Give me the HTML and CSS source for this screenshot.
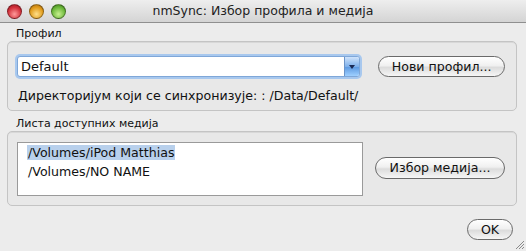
FILE: index.html
```html
<!DOCTYPE html>
<html>
<head>
<meta charset="utf-8">
<link rel="stylesheet" href="styles.css">
</head>
<body>
<div class="window">
  <div class="titlebar">
    <div class="lights">
      <span class="light red"></span>
      <span class="light yellow"></span>
      <span class="light green"></span>
    </div>
    <div class="title">nmSync: Избор профила и медија</div>
  </div>
  <div class="body">
    <div class="label">Профил</div>
    <div class="group g1">
      <div class="row">
        <div class="combo">
          <div class="combo-text">Default</div>
          <div class="combo-btn"><svg width="8" height="6" viewBox="0 0 8 6"><path d="M1 1 L7 1 L4 5 Z" fill="#1a2a55"/></svg></div>
        </div>
        <div class="btn btn-new">Нови профил...</div>
      </div>
      <div class="dir">Директоријум који се синхронизује: : /Data/Default/</div>
    </div>
    <div class="label label2">Листа доступних медија</div>
    <div class="group g2">
      <div class="list">
        <div class="item sel"><span>/Volumes/iPod Matthias</span></div>
        <div class="item"><span>/Volumes/NO NAME</span></div>
      </div>
      <div class="btn btn-media">Избор медија...</div>
    </div>
    <div class="footer">
      <div class="btn btn-ok">OK</div>
    </div>
  </div>
  <svg class="grip" width="12" height="12" viewBox="0 0 12 12">
    <path d="M11 3 L3 11 M11 6 L6 11 M11 9 L9 11" stroke="#8a8a8a" stroke-width="1"/>
  </svg>
</div>
</body>
</html>
```

FILE: styles.css
```css
* { box-sizing: border-box; }
html, body { margin: 0; padding: 0; }
body {
  width: 526px; height: 251px; overflow: hidden;
  font-family: "DejaVu Sans", sans-serif;
  font-size: 12.6px;
  color: #111;
  background: #ececec;
}
.window { position: relative; width: 526px; height: 251px; background: #ececec; }
.titlebar {
  height: 23px;
  background: linear-gradient(#eeeeee, #d4d4d4);
  border-bottom: 1px solid #8f8f8f;
  display: flex; align-items: center;
  position: relative;
}
.lights { display: flex; gap: 7px; padding-left: 7px; padding-top: 1px; }
.light { width: 15px; height: 15px; border-radius: 50%; display: block; border: 1px solid rgba(0,0,0,0.35); }
.red { background: radial-gradient(circle at 50% 70%, #ff9a9a, #d2303a 60%, #9a1a22); }
.yellow { background: radial-gradient(circle at 50% 70%, #ffe08a, #e09a1a 60%, #a86a10); }
.green { background: radial-gradient(circle at 50% 70%, #c8f090, #6cb83a 60%, #3e7a1a); }
.title {
  position: absolute; left: 0; right: 0; top: 3px;
  text-align: center; font-size: 12.5px; color: #222;
}
.body { padding: 4px 9px 0 7px; }
.label { padding-left: 9px; height: 13px; line-height: 13px; font-size: 11px; }
.label2 { margin-top: 6px; }
.group {
  border: 1px solid #c4c4c4;
  border-radius: 5px;
  background: #e8e8e8;
  margin-top: 1px;
  box-shadow: inset 0 1px 0 #d8d8d8;
}
.g1 { height: 70px; padding: 14px 11px 0 9px; }
.row { display: flex; align-items: center; height: 21px; }
.combo {
  width: 344px; height: 21px;
  border: 1px solid #7fa7d8;
  box-shadow: 0 0 0 2px #a8c8ee;
  background: #fff;
  border-radius: 3px;
  display: flex; align-items: stretch;
}
.combo-text { flex: 1; padding-left: 3px; line-height: 19px; font-size: 13px; }
.combo-btn {
  width: 15px;
  background: linear-gradient(#cfe3fb, #7eb0ea 50%, #5a97e0 51%, #9fd0ff);
  border-left: 1px solid #6b94c8;
  display: flex; align-items: center; justify-content: center;
  border-radius: 0 2px 2px 0;
}
.btn {
  height: 21px; line-height: 19px;
  border: 1px solid #6a6a6a;
  border-radius: 11px;
  background: linear-gradient(#ffffff, #f0f0f0 45%, #dcdcdc 55%, #f6f6f6);
  text-align: center;
  color: #111;
}
.btn-new { margin-left: 18px; width: 127px; }
.dir { margin-top: 11px; line-height: 15px; padding-left: 1px; }
.g2 { height: 75px; padding: 10px 11px 0 9px; display: flex; align-items: flex-start; }
.list {
  width: 346px; height: 54px;
  background: #fff;
  border: 1px solid #9a9a9a;
  padding: 2px 0 0 9px;
}
.item { height: 19px; line-height: 16px; }
.item span { padding: 0 1px; }
.sel span { background: #b8d0ec; }
.btn-media { margin-left: 12px; margin-top: 15px; width: 130px; height: 22px; line-height: 20px; }
.footer { display: flex; justify-content: flex-end; padding-top: 13px; padding-right: 4px; }
.btn-ok { width: 46px; }
.grip { position: absolute; right: 1px; bottom: 1px; }
```
